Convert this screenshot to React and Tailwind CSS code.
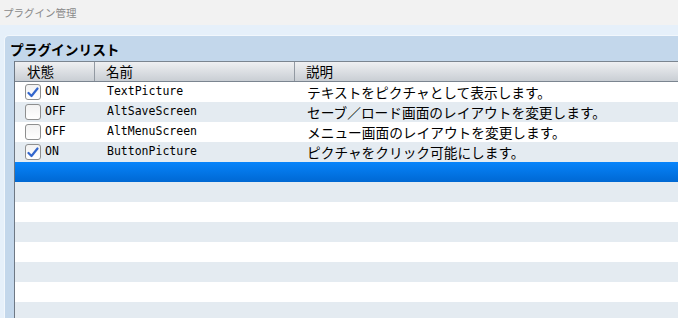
import React from "react";

const plugins = [
  { on: true, name: "TextPicture", desc: "テキストをピクチャとして表示します。" },
  { on: false, name: "AltSaveScreen", desc: "セーブ／ロード画面のレイアウトを変更します。" },
  { on: false, name: "AltMenuScreen", desc: "メニュー画面のレイアウトを変更します。" },
  { on: true, name: "ButtonPicture", desc: "ピクチャをクリック可能にします。" },
];

const Checkbox = ({ checked }) => (
  <div className="flex h-[16px] w-[16px] items-center justify-center rounded-[3px] border border-[#8e8f8f] bg-gradient-to-b from-[#f2f2f2] to-[#ffffff]">
    {checked && (
      <svg width="12" height="11" viewBox="0 0 12 11">
        <path d="M1.5 6 L4.5 9 L10.5 1.5" fill="none" stroke="#3366cc" strokeWidth="2.2" strokeLinecap="round" strokeLinejoin="round" />
      </svg>
    )}
  </div>
);

export default function App() {
  const emptyRows = Array.from({ length: 8 });

  return (
    <div className="h-[318px] w-[678px] overflow-hidden bg-[#e6f0fa] font-['Noto_Sans_CJK_JP',sans-serif]">
      <div className="h-[25px] bg-[#f2f2f2] pl-[3px] text-[10.5px] leading-[25px] text-[#8a8a8a]">プラグイン管理</div>
      <div className="pl-[4px] pt-[10px]">
        <div className="rounded-tl-[5px] border-l border-t border-[#f2f7fc] bg-[#c3d7eb]">
          <div className="h-[25px] pl-[5px] text-[13.7px] font-bold leading-[26px] text-black">プラグインリスト</div>
          <div className="pl-[9px]">
            <div className="border-l border-[#6e7884] bg-white">
              {/* header */}
              <div className="flex h-[21px] border-y border-[#7b8590] bg-gradient-to-b from-[#eff0f2] to-[#c9ced4] text-[13.5px] leading-[19px] text-black">
                <div className="w-[80px] border-r border-[#9299a2] pl-[12px]">状態</div>
                <div className="w-[200px] border-r border-[#9299a2] pl-[11px]">名前</div>
                <div className="flex-1 pl-[11px]">説明</div>
              </div>
              {/* rows */}
              {plugins.map((p, i) => (
                <div
                  key={p.name}
                  className={`flex h-[20px] items-center text-black ${i % 2 === 0 ? "bg-white" : "bg-[#e4ebf1]"}`}
                >
                  <div className="flex w-[81px] items-center gap-[4px] pl-[10px] font-['DejaVu_Sans_Mono',monospace] text-[11.5px]">
                    <Checkbox checked={p.on} />
                    <span>{p.on ? "ON" : "OFF"}</span>
                  </div>
                  <div className="w-[200px] pl-[11px] font-['DejaVu_Sans_Mono',monospace] text-[11.5px]">{p.name}</div>
                  <div className="flex-1 whitespace-nowrap pl-[11px] text-[13.7px] leading-[20px]">{p.desc}</div>
                </div>
              ))}
              <div className="h-[20px] bg-gradient-to-b from-[#0884fb] to-[#0068d3]" />
              {emptyRows.map((_, i) => (
                <div key={i} className={`h-[20px] ${i % 2 === 0 ? "bg-[#e4ebf1]" : "bg-white"}`} />
              ))}
            </div>
          </div>
        </div>
      </div>
    </div>
  );
}
